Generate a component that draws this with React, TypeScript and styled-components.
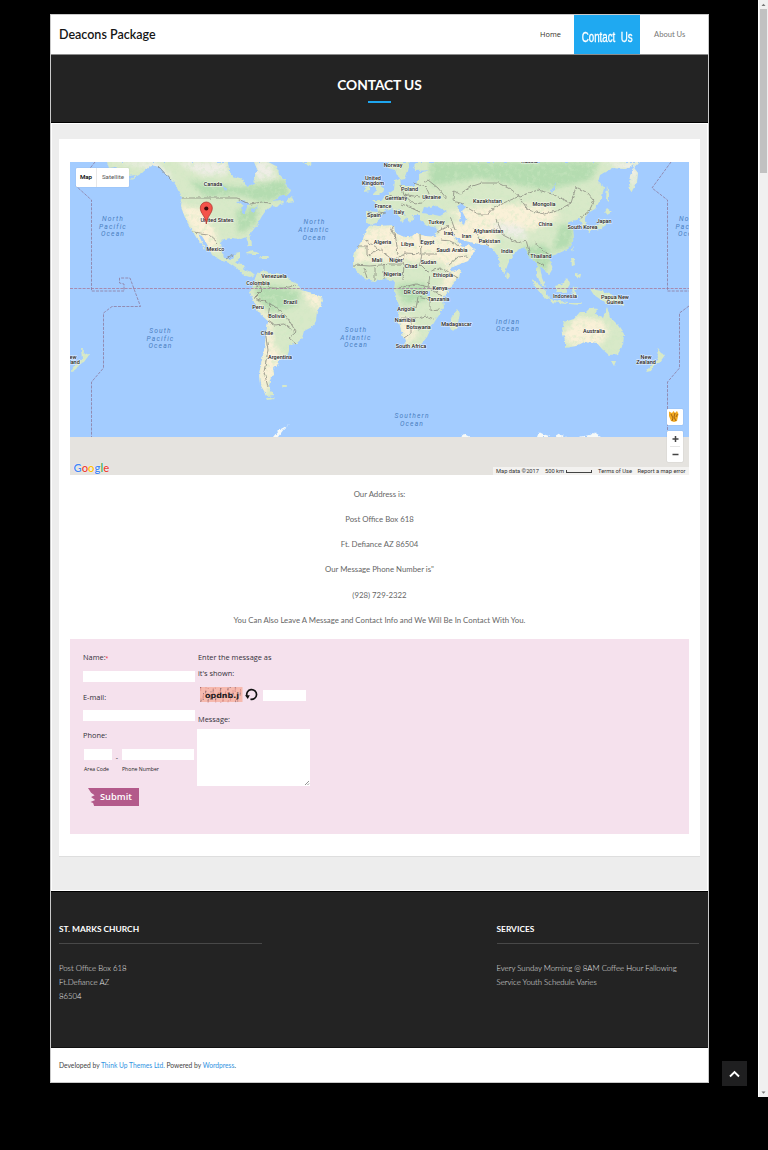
import React from "react";
import styled, { createGlobalStyle } from "styled-components";

const GlobalStyle = createGlobalStyle`
  * { box-sizing: border-box; }
  body { margin: 0; background: #000; font-family: Lato, "Liberation Sans", sans-serif; }
`;

const Screen = styled.div`
  display: flex;
  justify-content: space-between;
  width: 768px;
  height: 1150px;
  overflow: hidden;
  background: #000;
`;

const Frame = styled.div`
  width: 659px;
  height: 1069px;
  margin: 14px 0 0 50px;
  border: 1px solid #c9c9c9;
  display: flex;
  flex-direction: column;
  background: #ededed;
`;

const Header = styled.header`
  flex: 0 0 39px;
  display: flex;
  align-items: stretch;
  background: #fff;
  padding-left: 8px;
`;

const Brand = styled.div`
  flex: 1;
  font-size: 12.5px;
  font-weight: 600;
  line-height: 39px;
  color: #151515;
`;

const HomeLink = styled.a`
  width: 21px;
  margin-right: 13px;
  font: 7.4px/39px "Open Sans", sans-serif;
  color: #33332a;
  white-space: nowrap;
`;

const ActiveTab = styled.a`
  width: 66px;
  display: flex;
  align-items: center;
  justify-content: center;
  padding-top: 4px;
  background: #1fa9f1;
  color: #fff;
`;

const TabLabel = styled.span`
  flex: none;
  font: 15px "Liberation Sans", sans-serif;
  -webkit-text-stroke: 0.3px #fff;
  white-space: pre;
  transform: scaleX(0.65);
`;

const AboutLink = styled.a`
  width: 68px;
  padding-left: 14px;
  font-size: 7.6px;
  line-height: 39px;
  color: #777;
  white-space: nowrap;
`;

const Hero = styled.section`
  flex: 0 0 69px;
  display: flex;
  flex-direction: column;
  align-items: center;
  background: #232323;
  border-top: 1px solid #8c8c8c;
  border-bottom: 1px solid #000;
  color: #fff;
`;

const HeroTitle = styled.h1`
  margin: 19.5px 0 0;
  font-size: 13.8px;
  line-height: 20px;
  font-weight: 700;
  letter-spacing: -0.1px;
`;

const HeroRule = styled.div`
  width: 23px;
  height: 2px;
  margin-top: 6.5px;
  background: #1ea5ee;
`;

const Body = styled.main`
  flex: 1;
  padding: 15px 8px 0;
  border: 1px solid #fff;
`;

const Card = styled.div`
  width: 641px;
  height: 718px;
  margin-left: -1px;
  padding: 23px 11px 0;
  background: #fff;
  border-bottom: 1px solid #dedede;
`;

const MapBox = styled.div`
  position: relative;
  width: 619px;
  height: 313px;
  overflow: hidden;
  font-family: Roboto, sans-serif;
  svg { display: block; }
`;

const MapTypes = styled.div`
  position: absolute;
  left: 6px;
  top: 6px;
  width: 53px;
  height: 19px;
  display: flex;
  background: #fff;
  border-radius: 1px;
  box-shadow: 0 0 1px rgba(0, 0, 0, 0.25);
`;

const MapType = styled.div<{ $on?: boolean }>`
  flex: 0 0 ${(p) => (p.$on ? 21 : 32)}px;
  font-size: ${(p) => (p.$on ? 6.2 : 6.2)}px;
  line-height: 19px;
  text-align: center;
  font-weight: ${(p) => (p.$on ? 500 : 400)};
  color: ${(p) => (p.$on ? "#000" : "#555")};
  border-right: ${(p) => (p.$on ? "1px solid #e8e8e8" : "0")};
`;

const MapButtons = styled.div`
  position: absolute;
  right: 6px;
  bottom: 13px;
  display: flex;
  flex-direction: column;
  gap: 6px;
`;

const MapButton = styled.div<{ $h: number }>`
  width: 16px;
  height: ${(p) => p.$h}px;
  background: #fff;
  border-radius: 1px;
  box-shadow: 0 0 1px rgba(0, 0, 0, 0.3);
`;

const Logo = styled.div`
  position: absolute;
  left: 3.5px;
  bottom: 0;
  font: 600 11.3px/15px "Lato", sans-serif;
  text-shadow: 0 0 1px #fff, 0 0 1px #fff;
`;

const Letter = styled.span<{ $c: string }>`
  color: ${(p) => p.$c};
`;

const MapLegal = styled.div`
  position: absolute;
  right: 0;
  bottom: 0;
  width: 196px;
  height: 8px;
  display: flex;
  align-items: center;
  padding-left: 3px;
  background: #f3f2f0;
  font-size: 5.75px;
  line-height: 8px;
  color: #333;
  white-space: nowrap;
`;

const LegalItem = styled.span<{ $w: number }>`
  flex: 0 0 ${(p) => p.$w}px;
`;

const ScaleBar = styled.span`
  width: 26px;
  height: 3px;
  margin-right: 6px;
  border: 1px solid #444;
  border-top: 0;
`;

const Address = styled.div`
  height: 164px;
  padding-top: 6.5px;
  text-align: center;
`;

const Line = styled.p`
  margin: 0;
  font-size: 7.8px;
  line-height: 25.3px;
  color: #666;
`;

const Form = styled.form`
  height: 195px;
  padding: 10px 13px 0;
  display: flex;
  gap: 2px;
  background: #f5e1ed;
  font-family: "Open Sans", sans-serif;
  color: #33303a;
`;

const Column = styled.div<{ $w: number }>`
  width: ${(p) => p.$w}px;
  display: flex;
  flex-direction: column;
`;

const Label = styled.label<{ $h: number }>`
  height: ${(p) => p.$h}px;
  font-size: 7.4px;
  line-height: 17px;
  white-space: nowrap;
`;

const Required = styled.span`
  font-size: 5px;
  color: #f02030;
`;

const Field = styled.div<{ $w: number; $gap?: number }>`
  width: ${(p) => p.$w}px;
  height: 11px;
  margin-bottom: ${(p) => p.$gap ?? 0}px;
  background: #fff;
`;

const PhoneRow = styled.div`
  display: grid;
  grid-template-columns: 29px 9px 73px;
  height: 16px;
  margin-left: 0.5px;
  font-size: 7px;
  line-height: 18px;
  text-align: center;
`;

const SubLabels = styled.div`
  display: grid;
  grid-template-columns: 38px 73px;
  height: 23px;
  padding-left: 1px;
  font-size: 5.2px;
  line-height: 9px;
  color: #222;
  white-space: nowrap;
`;

const Submit = styled.div`
  width: 51px;
  height: 18px;
  margin-left: 5px;
  padding-left: 12px;
  font: 600 9.3px/18px "Open Sans", sans-serif;
  color: #fff;
  background: #b35a8b;
  clip-path: polygon(0 0, 100% 0, 100% 100%, 12% 100%, 10% 84%, 5% 78%, 14% 66%, 6% 50%, 13% 40%, 6% 26%);
`;

const CaptchaRow = styled.div`
  display: flex;
  align-items: center;
  height: 16px;
  margin: -1px 0 8px 1.5px;
`;

const Captcha = styled.div`
  width: 43px;
  height: 16px;
  svg { display: block; }
`;

const Refresh = styled.svg`
  width: 13px;
  height: 13px;
  margin: 0 5px 1px 2.5px;
`;

const TextArea = styled.div`
  width: 113px;
  height: 57px;
  margin-left: -1px;
  display: flex;
  align-items: flex-end;
  justify-content: flex-end;
  background: #fff;
`;

const Footer = styled.footer`
  flex: 0 0 157px;
  display: flex;
  justify-content: space-between;
  padding: 28px 9px 0 8px;
  background: #232323;
  border-top: 1px solid #000;
  border-bottom: 1px solid #111;
`;

const Widget = styled.section`
  width: 202.5px;
  color: #e6e6e6;
`;

const WidgetTitle = styled.h2`
  margin: 0 0 17px;
  height: 24px;
  border-bottom: 1px solid #484848;
  font-size: 8.4px;
  line-height: 19px;
  font-weight: 700;
  color: #fff;
`;

const WidgetText = styled.p`
  margin: 0;
  font-size: 7.8px;
  line-height: 14px;
  font-weight: 300;
  white-space: nowrap;
`;

const Credits = styled.div`
  flex: 0 0 34px;
  padding-left: 8px;
  background: #fff;
  font-size: 6.7px;
  line-height: 34px;
  color: #444;
`;

const Blue = styled.a`
  color: #3093e2;
`;

const Side = styled.div`
  display: flex;
  gap: 11px;
`;

const ToTop = styled.div`
  width: 25px;
  height: 25px;
  margin-top: 1061px;
  display: flex;
  align-items: center;
  justify-content: center;
  background: #1f1f20;
`;

const Scrollbar = styled.div`
  width: 10px;
  height: 1097px;
  display: flex;
  flex-direction: column;
  align-items: center;
  justify-content: space-between;
  background: #f0f0f0;
  border-left: 1px solid #fff;
`;

const Arrow = styled.svg`
  width: 9px;
  height: 9px;
`;

const Thumb = styled.div`
  width: 7px;
  height: 164px;
  margin-bottom: auto;
  background: #c1c1c1;
`;

const LAND = [
  // North and Central America
  "M107 162 L109 168 L116 167 L121 171 L128 176 L136 175 L129 181 L142 173 L151 165 L160 167 L167 175 L173 181 L179 190 L182 198 L181 207 L186 220 L193 232 L199 242 L205 250 L203 244 L198 234 L202 236 L207 244 L212 255 L222 261 L230 263 L237 268 L243 275 L250 277 L255 275 L250 271 L245 272 L243 264 L235 263 L240 257 L240 253 L235 254 L232 259 L225 259 L221 250 L220 243 L224 239 L232 238 L241 239 L246 237 L249 246 L252 245 L250 234 L257 225 L262 216 L267 209 L272 206 L277 207 L280 204 L284 203 L282 200 L273 201 L282 195 L289 195 L291 190 L287 187 L285 180 L280 175 L276 166 L268 162 L254 162 L258 171 L254 177 L255 184 L247 187 L243 179 L233 176 L229 171 L228 162 Z",
  "M286 201 L292 196 L294 202 L289 203 Z",
  "M302 162 L310 166 L312 162 Z",
  "M245 253 L252 250 L259 254 L254 254 Z M260 256 L268 256 L269 259 L261 259 Z",
  // South America
  "M255 278 L258 273 L264 270 L270 273 L277 273 L287 276 L290 281 L298 284 L301 290 L312 293 L322 297 L323 302 L317 311 L316 321 L312 327 L304 331 L302 338 L296 344 L289 345 L289 351 L287 357 L279 360 L278 365 L273 368 L274 374 L270 380 L269 388 L274 395 L267 396 L260 384 L259 374 L262 360 L264 350 L266 335 L268 321 L258 312 L254 302 L250 292 L253 286 Z",
  "M266 398 L274 397 L275 399 L267 400 Z M282 385 L287 385 L286 387 L283 387 Z",
  // Africa
  "M370 225 L380 226 L394 225 L395 233 L404 237 L411 237 L416 233 L425 236 L435 237 L439 248 L444 257 L449 267 L453 272 L461 270 L459 277 L450 288 L443 298 L444 308 L437 318 L432 326 L427 337 L419 347 L407 348 L403 336 L398 319 L400 308 L394 291 L395 282 L385 279 L375 281 L364 279 L353 267 L353 256 L357 248 L363 239 L366 230 Z",
  "M458 309 L460 314 L456 329 L451 331 L449 325 L452 316 Z",
  // Europe and Asia
  "M370 225 L366 222 L366 211 L378 212 L376 203 L372 200 L381 200 L388 194 L394 190 L395 180 L400 178 L401 186 L414 186 L419 180 L419 173 L430 170 L416 171 L413 166 L417 162 L640 162 L634 168 L638 173 L637 182 L631 193 L629 185 L630 176 L635 165 L625 169 L612 168 L600 175 L598 182 L604 187 L602 197 L595 209 L586 214 L585 219 L587 225 L582 226 L580 218 L573 221 L568 223 L573 228 L574 239 L568 249 L557 254 L549 257 L550 262 L553 268 L549 275 L544 270 L540 267 L542 278 L546 287 L541 285 L537 275 L537 263 L530 258 L525 247 L518 250 L512 256 L508 264 L504 275 L500 267 L497 255 L493 249 L486 246 L475 243 L466 241 L457 238 L453 233 L456 240 L463 247 L469 245 L475 250 L468 261 L450 268 L444 257 L437 243 L435 237 L438 228 L428 226 L420 220 L420 215 L413 215 L414 219 L409 222 L405 214 L397 208 L402 213 L407 217 L402 222 L396 212 L392 208 L385 210 L380 217 L376 223 Z",
  "M388 162 L388 168 L395 170 L400 180 L405 179 L408 171 L410 162 Z",
  "M374 178 L378 178 L379 183 L384 191 L379 195 L372 195 L377 190 L374 185 Z M365 186 L371 184 L370 191 L364 192 Z",
  "M607 186 L609 194 L609 202 L606 199 Z M604 212 L607 208 L612 212 L607 215 Z M605 218 L606 225 L600 229 L591 230 L589 234 L588 229 L598 225 Z",
  "M507 272 L510 276 L508 279 L506 276 Z M572 249 L574 246 L573 252 Z",
  // Islands of South East Asia
  "M532 279 L537 283 L546 291 L549 299 L545 299 L537 289 Z M550 299 L559 301 L567 302 L566 304 L551 302 Z M555 286 L562 284 L567 278 L570 284 L565 293 L558 293 Z M572 288 L578 287 L574 291 L578 297 L573 297 Z M571 258 L574 258 L575 265 L572 266 Z M575 273 L581 274 L580 279 L575 276 Z M569 303 L582 303 L580 305 L569 304 Z",
  "M590 289 L596 290 L602 291 L612 295 L619 299 L625 305 L615 303 L607 304 L600 299 L594 295 Z",
  // Australia and New Zealand
  "M562 329 L564 322 L574 319 L580 312 L586 312 L590 308 L597 309 L596 314 L603 318 L607 307 L610 317 L617 324 L624 334 L623 345 L618 354 L609 355 L602 349 L597 343 L586 341 L576 346 L565 348 L565 341 Z",
  "M611 361 L616 361 L614 366 Z",
  "M657 348 L661 353 L665 355 L660 362 L655 364 L651 371 L646 372 L650 366 L658 359 Z",
  "M81 348 L85 353 L89 355 L84 362 L79 364 L75 371 L70 372 L74 366 L82 359 Z",
];

const DESERT = [
  "M352 262 L366 228 L398 225 L440 236 L478 250 L448 270 L440 262 L400 261 Z",
  "M437 228 L458 222 L500 222 L495 244 L478 262 L448 270 Z",
  "M448 212 L500 204 L545 205 L560 216 L535 230 L500 226 L470 225 Z",
  "M450 268 L464 268 L440 300 L440 288 Z",
  "M561 335 L577 317 L600 320 L610 330 L600 345 L575 347 Z",
  "M180 205 L204 210 L215 230 L220 252 L205 248 L188 222 Z",
  "M397 315 L412 318 L418 336 L404 344 Z",
  "M249 288 L258 300 L271 322 L274 345 L284 357 L264 396 L258 378 L266 325 Z",
  "M303 290 L324 295 L318 312 L308 302 Z",
];

const FOREST = [
  "M188 180 L215 184 L240 187 L285 180 L290 196 L262 202 L240 195 L205 197 Z",
  "M254 284 L276 286 L300 292 L296 306 L272 312 L258 302 Z",
  "M395 285 L425 282 L428 300 L404 304 Z",
  "M430 162 L600 162 L590 180 L545 190 L480 178 L430 186 Z",
  "M520 248 L545 244 L552 256 L545 272 L532 262 Z",
  "M560 225 L574 225 L572 246 L552 252 Z",
  "M236 210 L258 206 L256 224 L238 234 Z",
];

const PALE = [
  "M108 162 L158 162 L176 184 L150 168 Z",
  "M176 162 L226 162 L228 174 L205 176 Z",
  "M254 162 L270 162 L276 178 L256 180 Z",
  "M490 222 L522 226 L528 240 L505 236 Z",
  "M600 162 L640 162 L634 190 L626 170 Z",
];

const BORDERS =
  "M182 198 H237 L250 204 L262 202 L270 203 M193 232 L208 234 L218 243 M158 166 L171 180 M226 259 L233 255 M256 286 L268 282 L270 288 L284 288 L296 285 M258 282 L262 290 L254 298 L266 302 L274 306 L286 316 L290 322 L296 332 L289 338 L296 344 M268 321 L274 325 L284 324 L292 330 M265 330 L268 350 L264 372 L268 387 M270 303 L268 318 M365 240 L379 249 L394 261 L404 253 L422 254 L436 254 M395 233 L398 254 M420 234 L421 254 M357 246 H367 V256 L379 249 M394 225 L391 231 L396 237 M354 265 L370 266 L390 264 L404 264 L403 280 M404 253 L403 264 M422 254 L420 264 L428 272 L440 268 L447 271 M384 264 V279 M375 268 V280 M364 268 L367 278 M399 288 L416 284 L428 287 L430 276 M403 308 H416 L418 297 L430 300 L430 310 L440 309 M399 318 H418 L426 316 L434 319 M411 319 V333 L404 338 M418 330 L429 326 M428 287 L442 296 M447 271 L458 278 M454 191 L460 194 L470 187 L482 183 L498 183 L512 190 L520 197 M454 191 L453 201 L464 204 M466 207 L478 214 L488 214 L494 207 L520 196 L538 190 L552 194 L571 203 L557 211 L544 214 L528 210 L520 198 M576 187 L586 192 L594 201 L589 211 L580 218 M571 203 L576 187 M496 219 L503 235 L518 243 L526 240 L530 255 M488 231 L498 228 M474 229 L479 239 L489 246 M450 216 L455 230 M437 232 L448 226 L455 235 M440 240 L450 241 L460 246 M448 266 L458 257 L467 256 M534 241 L542 250 L551 255 M537 262 L544 266 M389 195 L398 198 L408 195 L420 197 M401 186 L404 195 L414 204 M413 183 L426 187 L430 196 L422 203 L414 204 M424 182 L428 180 L438 188 L447 199 M420 212 L409 207 L402 204 M368 212 L372 213 M378 212 L386 213";

type MapLabel = [string, number, number];
const LABELS: MapLabel[] = [
  ["Canada", 213, 186], ["United States", 217, 221.5], ["Mexico", 215.5, 251], ["Venezuela", 274, 278],
  ["Colombia", 258, 284.5], ["Peru", 258, 309], ["Brazil", 290.5, 304], ["Bolivia", 276.5, 318], ["Chile", 267, 335],
  ["Argentina", 280, 359], ["Norway", 393, 167], ["United", 373, 179.5], ["Kingdom", 373, 184.5], ["Poland", 409.5, 190.5],
  ["Germany", 396, 199.5], ["Ukraine", 431.5, 199], ["France", 383, 207.5], ["Italy", 399, 213.5], ["Spain", 374, 217],
  ["Turkey", 436.5, 223.5], ["Kazakhstan", 487.5, 202.5], ["Mongolia", 544, 206], ["China", 545.5, 226], ["Japan", 604, 223],
  ["South Korea", 582.5, 228.5], ["Iraq", 448.5, 234.5], ["Iran", 466.5, 237.5], ["Afghanistan", 488.5, 232.5], ["Pakistan", 489.5, 242.5],
  ["India", 507, 253], ["Thailand", 541, 258], ["Algeria", 382.5, 244], ["Libya", 407.5, 246], ["Egypt", 427.5, 243.5],
  ["Saudi Arabia", 452, 252], ["Mali", 377, 262], ["Niger", 396, 262], ["Chad", 411, 268], ["Sudan", 428.5, 263.5],
  ["Nigeria", 392.5, 275.5], ["Ethiopia", 443, 276.5], ["Kenya", 440, 290], ["DR Congo", 416, 293.5], ["Tanzania", 438.5, 301],
  ["Angola", 406, 311], ["Namibia", 405, 322], ["Botswana", 418.5, 329], ["Madagascar", 456.5, 325.5], ["South Africa", 411, 347.5],
  ["Indonesia", 565, 297.5], ["Papua New", 615, 298.5], ["Guinea", 615, 303.5], ["Australia", 594, 332.5], ["New", 646, 358.5],
  ["Zealand", 646, 364], ["ew", 73, 358.5], ["land", 74.5, 364], ["Russia", 529.5, 163],
];

const OCEANS: MapLabel[] = [
  ["North", 113, 220.5], ["Pacific", 113, 228.5], ["Ocean", 113, 236], ["North", 314.5, 224], ["Atlantic", 314, 232],
  ["Ocean", 314.5, 239.5], ["South", 160.5, 332.5], ["Pacific", 160.5, 340.5], ["Ocean", 160.5, 348], ["South", 356, 331.5],
  ["Atlantic", 356, 339.5], ["Ocean", 356, 347], ["Indian", 508, 323.5], ["Ocean", 508, 331], ["Southern", 412, 417.5],
  ["Ocean", 412, 425.5], ["North", 690, 220.5], ["Pacific", 689.5, 228.5], ["Ocean", 690, 236],
];

function WorldMap() {
  return (
    <svg width="619" height="313" viewBox="70 162 619 313">
      <defs>
        <clipPath id="land">
          {LAND.map((d) => <path key={d} d={d} />)}
        </clipPath>
        <filter id="soft" x="-20%" y="-20%" width="140%" height="140%">
          <feGaussianBlur stdDeviation="2.5" />
        </filter>
        <filter id="terrain" x="0" y="0" width="100%" height="100%">
          <feTurbulence type="fractalNoise" baseFrequency="0.22" numOctaves="3" seed="8" />
          <feColorMatrix values="0 0 0 0 0.62  0 0 0 0 0.81  0 0 0 0 0.55  0 3.4 0 0 -1.6" />
        </filter>
        <filter id="coast" x="-5%" y="-5%" width="110%" height="110%">
          <feTurbulence type="fractalNoise" baseFrequency="0.25" numOctaves="2" seed="3" result="n" />
          <feDisplacementMap in="SourceGraphic" in2="n" scale="3.5" xChannelSelector="R" yChannelSelector="G" />
        </filter>
      </defs>
      <rect x="70" y="162" width="619" height="275" fill="#a3ccff" />
      <g filter="url(#coast)">
        <g clipPath="url(#land)">
          <rect x="70" y="155" width="619" height="282" fill="#d8e9c8" />
          <g filter="url(#soft)">
            {FOREST.map((d) => <path key={d} d={d} fill="#b4dcb0" />)}
            {DESERT.map((d) => <path key={d} d={d} fill="#faf1d8" />)}
            {PALE.map((d) => <path key={d} d={d} fill="#efeee6" />)}
          </g>
          <rect x="70" y="162" width="619" height="275" filter="url(#terrain)" opacity="0.45" />
        </g>
        <g fill="#a3ccff">
          <path d="M422 213 L424 207 L431 208 L434 205 L438 207 L447 212 L440 216 L430 214 Z" />
          <path d="M457 206 L463 203 L466 207 L462 211 L466 219 L464 225 L459 221 L461 215 Z" />
          <path d="M236 201 L244 200 L250 204 L247 206 L245 214 L242 213 L243 206 Z M251 210 L259 206 L258 208 L252 213 Z" />
          <path d="M552 189 L556 182 L554 190 L550 193 Z M427 292 L430 291 L430 296 L427 296 Z M222 184 L226 189 L225 191 Z" />
        </g>
        <g fill="#f7faf8">
          <path d="M273 437 L279 430 L290 424 L284 429 L278 437 Z M460 437 L464 434 L470 437 Z M537 437 L539 432 L543 434 L549 436 L550 437 Z M555 437 L560 434 L566 437 Z M578 437 L590 435 L596 432 L597 435 L601 437 Z" />
        </g>
        <path d={BORDERS} fill="none" stroke="#86867c" strokeWidth="0.75" />
      </g>
      <rect x="70" y="437" width="619" height="38" fill="#e5e3df" />
      <g fill="none" stroke="#8d7ba0" strokeWidth="0.8" strokeDasharray="3 1.2">
        <path d="M70 288.5 H689" stroke="#a77a9c" />
        <path d="M95 162 L76 186 L91.500 200 V291 H124 V284 L119.500 283 V278 H130 L140.500 306.500 H112 L103.500 313 V368 L91.500 382 V437" />
        <path d="M671 162 L652 188 L667.500 200 V291 H689 M689 306 L679.500 313 V368 L667.500 382 V437" />
      </g>
      <g fontFamily="Roboto" fontSize="6.7" fontStyle="italic" fill="#4b80bf" textAnchor="middle" letterSpacing="1.15">
        {OCEANS.map(([t, x, y], i) => <text key={i} x={x} y={y}>{t}</text>)}
      </g>
      <g fontFamily="Roboto" fontSize="5.5" fontWeight="500" fill="#1e1e1e" stroke="#fff" strokeOpacity="0.75" strokeWidth="1.2" paintOrder="stroke" strokeLinejoin="round" textAnchor="middle">
        {LABELS.map(([t, x, y], i) => <text key={i} x={x} y={y}>{t}</text>)}
      </g>
      <path d="M206.300 224 C205.500 216 200.300 213.500 200.300 208 A6 6 0 0 1 212.300 208 C212.300 213.500 207.100 216 206.300 224 Z" fill="#f4544b" stroke="#a82b27" strokeWidth="0.7" />
      <circle cx="206.300" cy="208.500" r="2.100" fill="#3d0b0b" />
    </svg>
  );
}

const CAPTCHA_DOTS = Array.from({ length: 110 }, (_, i) => ({
  x: (i * 17.3) % 42,
  y: (i * 7.9 + (i % 5)) % 15,
}));

const GOOGLE: [string, string][] = [
  ["G", "#4285f4"], ["o", "#ea4335"], ["o", "#fbbc05"], ["g", "#4285f4"], ["l", "#34a853"], ["e", "#ea4335"],
];

export default function App() {
  return (
    <Screen>
      <GlobalStyle />
      <Frame>
        <Header>
          <Brand>Deacons Package</Brand>
          <HomeLink>Home</HomeLink>
          <ActiveTab><TabLabel>{"Contact  Us"}</TabLabel></ActiveTab>
          <AboutLink>About Us</AboutLink>
        </Header>
        <Hero>
          <HeroTitle>CONTACT US</HeroTitle>
          <HeroRule />
        </Hero>
        <Body>
          <Card>
            <MapBox>
              <WorldMap />
              <MapTypes>
                <MapType $on>Map</MapType>
                <MapType>Satellite</MapType>
              </MapTypes>
              <MapButtons>
                <MapButton $h={16}>
                  <svg width="16" height="16" viewBox="0 0 16 16">
                    <path d="M2 2.500 L5 4 L6.500 2 L8 4 L10 2 L11.500 5 L10 12 L7 13 L4 12 L2 7 Z" fill="#f2aa20" />
                    <path d="M4 5 L6 9 L5 12 M8 4 L7 8 L9 12 M10.500 5 L9 8" stroke="#9b5d12" strokeWidth="0.900" fill="none" />
                  </svg>
                </MapButton>
                <MapButton $h={31}>
                  <svg width="16" height="31" viewBox="0 0 16 31">
                    <path d="M5.500 8 H11.500 M8.500 5 V11 M5.500 23.500 H11.500" stroke="#444" strokeWidth="1.500" />
                    <path d="M3 15.500 H13" stroke="#e6e6e6" />
                  </svg>
                </MapButton>
              </MapButtons>
              <Logo>{GOOGLE.map(([l, c], i) => <Letter key={i} $c={c}>{l}</Letter>)}</Logo>
              <MapLegal>
                <LegalItem $w={49}>Map data ©2017</LegalItem>
                <LegalItem $w={21}>500 km</LegalItem>
                <ScaleBar />
                <LegalItem $w={39.5}>Terms of Use</LegalItem>
                <LegalItem $w={50}>Report a map error</LegalItem>
              </MapLegal>
            </MapBox>
            <Address>
              <Line>Our Address is:</Line>
              <Line>Post Office Box 618</Line>
              <Line>Ft. Defiance AZ 86504</Line>
              <Line>Our Message Phone Number is"</Line>
              <Line>(928) 729-2322</Line>
              <Line>You Can Also Leave A Message and Contact Info and We Will Be In Contact With You.</Line>
            </Address>
            <Form>
              <Column $w={113}>
                <Label $h={22}>Name:<Required>*</Required></Label>
                <Field $w={112} $gap={7} />
                <Label $h={21}>E-mail:</Label>
                <Field $w={112} $gap={6} />
                <Label $h={22}>Phone:</Label>
                <PhoneRow><Field $w={28} /><span>-</span><Field $w={72} /></PhoneRow>
                <SubLabels><span>Area Code</span><span>Phone Number</span></SubLabels>
                <Submit>Submit</Submit>
              </Column>
              <Column $w={115}>
                <Label $h={16}>Enter the message as</Label>
                <Label $h={23}>it's shown:</Label>
                <CaptchaRow>
                  <Captcha>
                    <svg width="43" height="16" viewBox="0 0 43 16">
                      <rect width="42.500" height="15" fill="#f6b9ae" />
                      {CAPTCHA_DOTS.map((p, i) => <rect key={i} x={p.x} y={p.y} width="1" height="0.800" fill={i % 3 ? "#c8706e" : "#4b4254"} opacity="0.700" />)}
                      <text x="5" y="11" fontFamily="DejaVu Sans" fontWeight="700" fontSize="7.400" textLength="34" lengthAdjust="spacingAndGlyphs" fill="#221a20">opdnb.j</text>
                    </svg>
                  </Captcha>
                  <Refresh viewBox="0 0 13 13">
                    <path d="M2 8 A4.900 4.900 0 1 1 5.500 11.200" fill="none" stroke="#111" strokeWidth="1.700" />
                    <path d="M0 7.300 L4.800 7.300 L2.800 11 Z" fill="#111" />
                  </Refresh>
                  <Field $w={43} />
                </CaptchaRow>
                <Label $h={18}>Message:</Label>
                <TextArea>
                  <svg width="6" height="6" viewBox="0 0 6 6"><path d="M1 5 L5 1 M3.500 5 L5 3.500" stroke="#777" strokeWidth="0.800" /></svg>
                </TextArea>
              </Column>
            </Form>
          </Card>
        </Body>
        <Footer>
          <Widget>
            <WidgetTitle>ST. MARKS CHURCH</WidgetTitle>
            <WidgetText>Post Office Box 618</WidgetText>
            <WidgetText>Ft.Defiance AZ</WidgetText>
            <WidgetText>86504</WidgetText>
          </Widget>
          <Widget>
            <WidgetTitle>SERVICES</WidgetTitle>
            <WidgetText>Every Sunday Morning @ 8AM Coffee Hour Fallowing</WidgetText>
            <WidgetText>Service Youth Schedule Varies</WidgetText>
          </Widget>
        </Footer>
        <Credits>Developed by <Blue>Think Up Themes Ltd.</Blue> Powered by <Blue>Wordpress</Blue>.</Credits>
      </Frame>
      <Side>
        <ToTop>
          <svg width="11" height="8" viewBox="0 0 11 8"><path d="M1 6.500 L5.500 2 L10 6.500" fill="none" stroke="#fff" strokeWidth="1.900" /></svg>
        </ToTop>
        <Scrollbar>
          <Arrow viewBox="0 0 9 9"><path d="M2.500 6 L4.500 3.700 L6.500 6 Z" fill="#777" /></Arrow>
          <Thumb />
          <Arrow viewBox="0 0 9 9"><path d="M2.500 3.500 L4.500 5.800 L6.500 3.500 Z" fill="#777" /></Arrow>
        </Scrollbar>
      </Side>
    </Screen>
  );
}
